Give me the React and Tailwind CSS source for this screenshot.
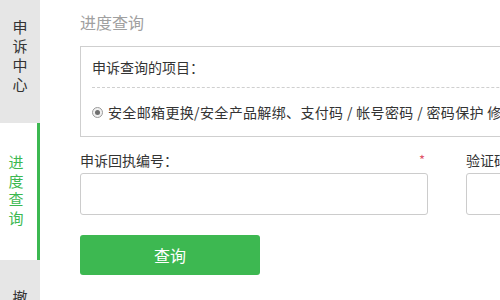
import React from "react";

const font = { fontFamily: '"Noto Sans CJK SC", "Noto Sans", sans-serif' };

function VChars({ text, className }) {
  return (
    <div className={className}>
      {Array.from(text).map((c, i) => (
        <div key={i}>{c}</div>
      ))}
    </div>
  );
}

export default function App() {
  return (
    <div
      className="w-[500px] h-[300px] overflow-hidden bg-white flex text-[#333]"
      style={font}
    >
      <div className="w-[40px] shrink-0 flex flex-col h-[300px] overflow-hidden">
        <div className="h-[123px] shrink-0 bg-[#e6e6e6] pt-[17px]">
          <VChars
            text="申诉中心"
            className="flex flex-col items-center text-[15px] leading-[19px] text-[#333]"
          />
        </div>
        <div className="h-[137px] shrink-0 bg-white border-r-[3px] border-[#3cb851] pt-[30px] pr-[5px]">
          <VChars
            text="进度查询"
            className="flex flex-col items-center text-[15px] leading-[18.5px] text-[#3cb851]"
          />
        </div>
        <div className="h-[80px] shrink-0 bg-[#e6e6e6] pt-[27px]">
          <VChars
            text="撤销"
            className="flex flex-col items-center text-[15px] leading-[19px] text-[#333]"
          />
        </div>
      </div>

      <div className="flex-1 pl-[40px] pt-[11px] flex flex-col">
        <div className="text-[16px] leading-[22px] text-[#a0a0a0]">进度查询</div>

        <div className="mt-[13px] w-[600px] border border-[#cfcfcf]">
          <div className="ml-[11px] h-[41px] flex items-center border-b border-dashed border-[#cfcfcf] text-[14px]">
            申诉查询的项目：
          </div>
          <div className="ml-[11px] h-[48px] flex items-center text-[14px] whitespace-nowrap tracking-[0.35px]">
            <span className="w-[11px] h-[11px] rounded-full border border-[#9a9a9a] bg-[#f0f0f0] flex items-center justify-center mr-[5px]">
              <span className="w-[5px] h-[5px] rounded-full bg-[#6e6e6e]"></span>
            </span>
            安全邮箱更换/安全产品解绑、支付码 / 帐号密码 / 密码保护 修复等
          </div>
        </div>

        <div className="mt-[12px] flex gap-[38px] w-[600px]">
          <div className="w-[348px] shrink-0">
            <div className="h-[22px] flex items-center justify-between text-[14px]">
              <span>申诉回执编号：</span>
              <span className="text-[#e0566a] text-[13px] pr-[3px]">*</span>
            </div>
            <div className="mt-[2px] h-[42px] border border-[#cccccc] rounded-[3px] bg-white"></div>
          </div>
          <div className="w-[200px] shrink-0">
            <div className="h-[22px] flex items-center text-[14px]">
              <span>验证码：</span>
            </div>
            <div className="mt-[2px] h-[42px] border border-[#cccccc] rounded-[3px] bg-white"></div>
          </div>
        </div>

        <button className="mt-[20px] w-[180px] h-[40px] rounded-[3px] bg-[#3db851] text-white text-[16px] flex items-center justify-center">
          查询
        </button>
      </div>
    </div>
  );
}
